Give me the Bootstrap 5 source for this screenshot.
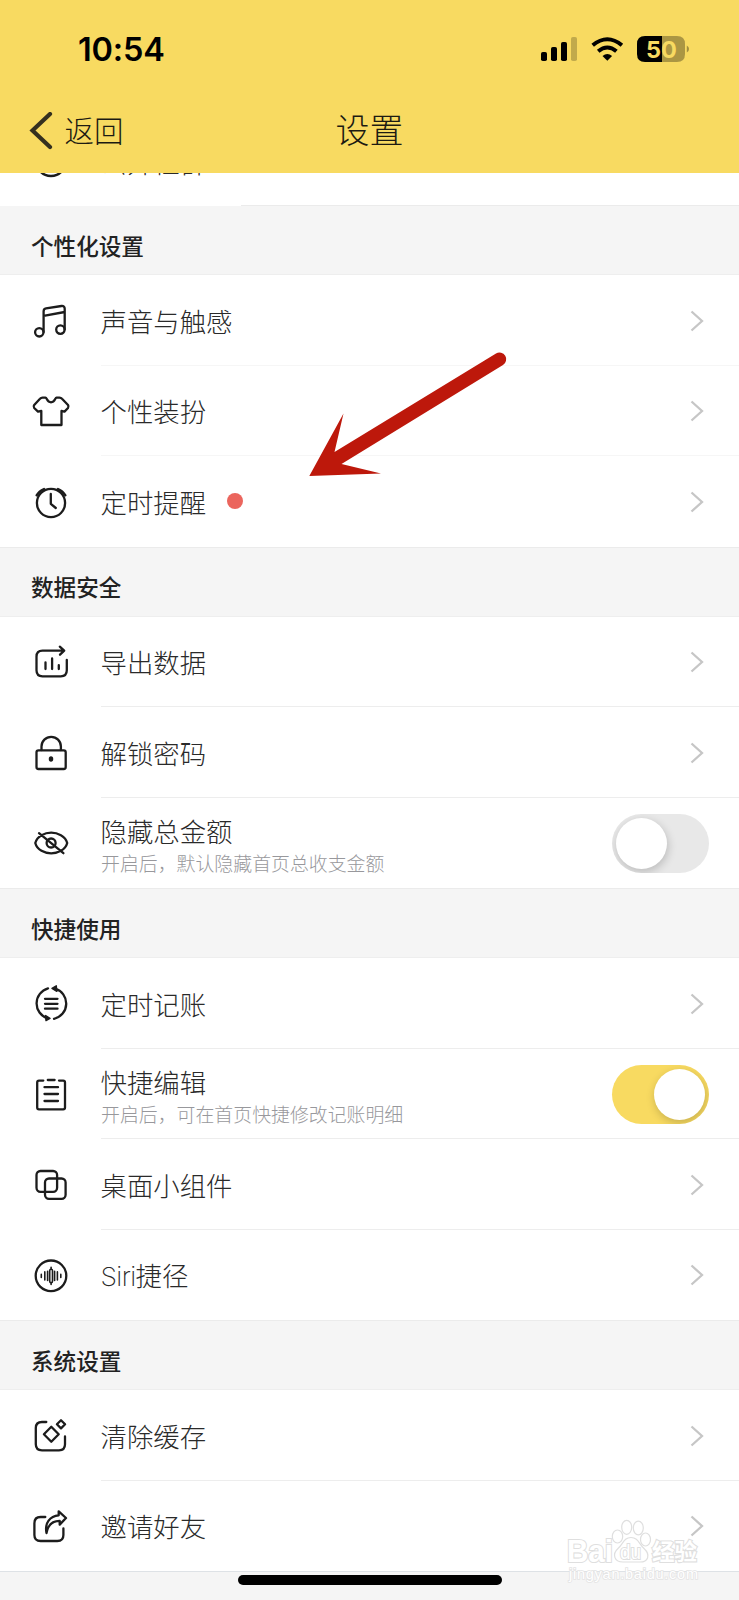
<!DOCTYPE html>
<html lang="zh-CN">
<head>
<meta charset="utf-8">
<meta name="viewport" content="width=device-width, initial-scale=1">
<title>设置</title>
<link href="https://cdn.jsdelivr.net/npm/bootstrap@5.3.0/dist/css/bootstrap.min.css" rel="stylesheet">
<script src="https://cdn.jsdelivr.net/npm/bootstrap@5.3.0/dist/js/bootstrap.bundle.min.js"></script>
<style>
  body { width: 739px; height: 1600px; overflow: hidden; background: #f5f5f5; color: #222; font-family: "Noto Sans CJK SC", sans-serif; }
  .topbar { height: 172.5px; background: #f8da61; z-index: 2; }
  .statusbar { height: 98px; padding: 0 50px 0 78px; }
  .clock { font: 600 32.5px/1 Inter, sans-serif; color: #000; letter-spacing: -.2px; padding-top: 3px; }
  .titlebar { height: 66px; }
  .back { left: 29px; font-size: 29.5px; font-weight: 300; line-height: 1; gap: 11.5px; color: #1c1a12; }
  .back span { padding-bottom: 3px; }
  .page-title { font-size: 34px; font-weight: 300; line-height: 1; padding-bottom: 4px; color: #1c1a12; }
  .peek { height: 32.5px; }
  .peek .setting { height: 90.7px; margin-top: -57px; }
  .section-title { height: 70px; padding: 12px 0 0 31px; font-size: 22.6px; font-weight: 500; line-height: 1; border-top: 1px solid #ebebeb; border-bottom: 1px solid #eeeeee; }
  .setting { height: 90.5px; padding-left: 27px; background: #fff; }
  .glyph { width: 48px; height: 48px; flex: none; fill: none; stroke: #1c1c1c; stroke-width: 2.3; stroke-linecap: round; stroke-linejoin: round; }
  .setting-body { margin-left: 26px; padding: 2px 35px 0 0; border-bottom: 1px solid #ededed; }
  .faint .setting-body { border-bottom-color: #f6f6f6; }
  .setting:last-child .setting-body { border-bottom-color: transparent; }
  .name { font-size: 26.4px; font-weight: 300; line-height: 32px; color: #2a2a2a; margin-left: -.5px; }
  .latin { font-family: Inter, sans-serif; font-weight: 200; letter-spacing: -.6px; }
  .two-line { padding-top: 4px; }
  .note { font-size: 18.9px; font-weight: 300; line-height: 24px; color: #98989c; margin-top: 4px; }
  .chev { width: 14px; height: 22px; fill: none; stroke: #c6c6c6; stroke-width: 2.3; }
  .dot { width: 16px; height: 16px; background: #eb655d; margin: -2px 0 0 21px; }
  .toggle { width: 97px; height: 59px; margin-right: -5px; padding: 4px; background: #e8e8e8; overflow: hidden; }
  .toggle.on { background: #f8da61; }
  .knob { width: 51px; height: 51px; background: #fff; box-shadow: 1px 3px 10px rgba(0,0,0,.2); }
  .pointer { left: 300px; top: 340px; }
  .home-bar { left: 238px; top: 1575px; width: 264px; height: 10px; background: #000; }
  .watermark { left: 560px; top: 1512px; }
</style>
</head>
<body class="position-relative">

<header class="topbar position-relative">
  <div class="statusbar d-flex align-items-center justify-content-between">
    <span class="clock">10:54</span>
    <svg width="150" height="30" viewBox="539 34 150 30">
      <g fill="#000">
        <rect x="541" y="52" width="6" height="9" rx="1.8"/><rect x="551" y="47" width="6" height="14" rx="1.8"/><rect x="561" y="42" width="6" height="19" rx="1.8"/>
        <rect x="571" y="37" width="6" height="24" rx="1.8" opacity=".22"/>
        <path d="M607.3 60.8 L602.5 56 Q607.3 52 612.1 56Z"/>
      </g>
      <g fill="none" stroke="#000" stroke-width="4"><path d="M592.7 45.2 Q607.3 33.2 621.9 45.2"/><path d="M598.2 51.3 Q607.3 43.8 616.4 51.3"/></g>
      <path d="M662 36 h15 q8 0 8 8 v10 q0 8 -8 8 h-15z" fill="#000" opacity=".31"/>
      <path d="M645 36 H662 V62 H645 Q637 62 637 54 V44 Q637 36 645 36Z" fill="#000"/>
      <path d="M686.8 45.5 Q689 46.5 689 49 T686.8 52.5Z" fill="#000" opacity=".35"/>
      <text x="661.5" y="57.5" text-anchor="middle" font-family="Inter, sans-serif" font-weight="700" font-size="23.5" fill="#f8da61">50</text>
    </svg>
  </div>
  <div class="titlebar position-relative d-flex align-items-center justify-content-center">
    <div class="back position-absolute d-flex align-items-center">
      <svg width="24" height="38" viewBox="0 0 24 38" fill="none" stroke="#35301f" stroke-width="4.2" stroke-linecap="round" stroke-linejoin="miter"><path d="M21 2 L3.5 18.5 L21 35"/></svg>
      <span>返回</span>
    </div>
    <span class="page-title">设置</span>
  </div>
</header>

<main>
  <div class="peek bg-white d-flex align-items-start">
    <div class="setting d-flex align-items-center">
      <svg class="glyph" viewBox="0 0 48 48"><circle cx="24" cy="24" r="15"/></svg>
      <div class="setting-body border-0"><span class="name">公开社群</span></div>
    </div>
  </div>

  <h2 class="section-title d-flex align-items-center m-0">个性化设置</h2>
  <section class="faint">
    <div class="setting d-flex align-items-center">
      <svg class="glyph" viewBox="0 0 48 48"><circle cx="12.3" cy="36.3" r="4.2"/><circle cx="33.4" cy="33.6" r="4.2"/><path d="M16.6 36 V15.5 Q16.6 12.8 19 12.4 L34.5 10 Q37.7 9.7 37.7 12.8 V33.6 M16.6 19.8 L37.7 16"/></svg>
      <div class="setting-body d-flex align-items-center flex-fill h-100"><span class="name">声音与触感</span><svg class="chev ms-auto" viewBox="0 0 14 22"><path d="M1.5 1.5 L12 11 L1.5 20.5"/></svg></div>
    </div>
    <div class="setting d-flex align-items-center">
      <svg class="glyph" viewBox="0 0 48 48"><path d="M15.5 10.6 H18.5 C20 10.6 19.8 15.3 24 15.3 C28.2 15.3 28 10.6 29.5 10.6 H32.5 Q34 10.6 35 11.8 L41 18 Q42 19.5 41 21 L37.5 24.6 L34.5 24 V38 H14.3 V24 L11 24.6 L7.2 21 Q6 19.5 7.2 18 L13 11.8 Q14 10.6 15.5 10.6Z"/></svg>
      <div class="setting-body d-flex align-items-center flex-fill h-100"><span class="name">个性装扮</span><svg class="chev ms-auto" viewBox="0 0 14 22"><path d="M1.5 1.5 L12 11 L1.5 20.5"/></svg></div>
    </div>
    <div class="setting d-flex align-items-center">
      <svg class="glyph" viewBox="0 0 48 48"><circle cx="24" cy="26" r="14.1"/><path d="M23.8 17 V26.8 L28.8 31 M9.6 18.3 Q12 14.2 17 12 M31 12 Q36 14.2 38.4 18.3"/></svg>
      <div class="setting-body d-flex align-items-center flex-fill h-100"><span class="name">定时提醒</span><span class="dot rounded-circle"></span><svg class="chev ms-auto" viewBox="0 0 14 22"><path d="M1.5 1.5 L12 11 L1.5 20.5"/></svg></div>
    </div>
  </section>

  <h2 class="section-title d-flex align-items-center m-0">数据安全</h2>
  <section>
    <div class="setting d-flex align-items-center">
      <svg class="glyph" viewBox="0 0 48 48"><path d="M39.8 22 V32.3 Q39.8 38.3 33.8 38.3 H15.5 Q9.5 38.3 9.5 32.3 V18.7 Q9.5 12.7 15.5 12.7 H37 M32.8 8.7 L37.2 12.7 L33 16.7 M18.5 24.5 V31 M25.1 20.5 V31 M31.8 27.2 V31"/></svg>
      <div class="setting-body d-flex align-items-center flex-fill h-100"><span class="name">导出数据</span><svg class="chev ms-auto" viewBox="0 0 14 22"><path d="M1.5 1.5 L12 11 L1.5 20.5"/></svg></div>
    </div>
    <div class="setting d-flex align-items-center">
      <svg class="glyph" viewBox="0 0 48 48"><rect x="9.5" y="22.3" width="29.2" height="18.7" rx="2"/><path d="M14.5 22 V18.5 A9.7 9.7 0 0 1 33.9 18.5 V22"/><ellipse cx="24" cy="30.9" rx="1.1" ry="1.6" fill="#1c1c1c"/></svg>
      <div class="setting-body d-flex align-items-center flex-fill h-100"><span class="name">解锁密码</span><svg class="chev ms-auto" viewBox="0 0 14 22"><path d="M1.5 1.5 L12 11 L1.5 20.5"/></svg></div>
    </div>
    <div class="setting d-flex align-items-center">
      <svg class="glyph" viewBox="0 0 48 48"><path d="M8.3 24 C10 17 18 13.6 24.2 13.6 S38.5 17 40.2 24 C38.5 31 30.5 34.4 24.2 34.4 S10 31 8.3 24Z M12 14.2 L36.4 34.2"/><circle cx="24.1" cy="24" r="4.5"/></svg>
      <div class="setting-body d-flex align-items-center flex-fill h-100"><div class="two-line d-flex flex-column"><span class="name">隐藏总金额</span><span class="note">开启后，默认隐藏首页总收支金额</span></div><div class="toggle rounded-pill d-flex ms-auto"><span class="knob rounded-circle"></span></div></div>
    </div>
  </section>

  <h2 class="section-title d-flex align-items-center m-0">快捷使用</h2>
  <section>
    <div class="setting d-flex align-items-center">
      <svg class="glyph" viewBox="0 0 48 48"><path d="M21 9.4 A15.6 15.6 0 0 0 20.5 39.3 M27 39.8 A15.6 15.6 0 0 0 28 9.6 M18 19.8 H30.5 M18 24.8 H30.5 M18 29.7 H30.5"/><path d="M25 9.4 L29.3 6.8 L29.8 12.4Z M23 39.4 L18.6 36.6 L19 41.6Z" fill="#1c1c1c" stroke-width="1.4"/></svg>
      <div class="setting-body d-flex align-items-center flex-fill h-100"><span class="name">定时记账</span><svg class="chev ms-auto" viewBox="0 0 14 22"><path d="M1.5 1.5 L12 11 L1.5 20.5"/></svg></div>
    </div>
    <div class="setting d-flex align-items-center">
      <svg class="glyph" viewBox="0 0 48 48"><path d="M16.3 10.6 H12 Q10.2 10.6 10.2 12.4 V37.6 Q10.2 39.4 12 39.4 H36.2 Q38 39.4 38 37.6 V12.4 Q38 10.6 36.2 10.6 H32 M20.8 10 H27.6 M17.5 17.2 H31 M17.5 24 H31 M17.5 31 H31"/></svg>
      <div class="setting-body d-flex align-items-center flex-fill h-100"><div class="two-line d-flex flex-column"><span class="name">快捷编辑</span><span class="note">开启后，可在首页快捷修改记账明细</span></div><div class="toggle on rounded-pill d-flex justify-content-end ms-auto"><span class="knob rounded-circle"></span></div></div>
    </div>
    <div class="setting d-flex align-items-center">
      <svg class="glyph" viewBox="0 0 48 48"><rect x="9.5" y="11" width="20.6" height="20.8" rx="4"/><rect x="18" y="18.5" width="20.6" height="20.3" rx="4"/></svg>
      <div class="setting-body d-flex align-items-center flex-fill h-100"><span class="name">桌面小组件</span><svg class="chev ms-auto" viewBox="0 0 14 22"><path d="M1.5 1.5 L12 11 L1.5 20.5"/></svg></div>
    </div>
    <div class="setting d-flex align-items-center">
      <svg class="glyph" viewBox="0 0 48 48"><circle cx="24" cy="24.8" r="15.3"/><g stroke-width="1.6"><path d="M14.3 23.4 V26.4 M17.8 20.9 V28.9 M20.6 20.4 V29.4 M27.6 20.4 V29.4 M30.4 20.9 V28.9 M33.8 23.4 V26.4 M24.1 16.2 V17.9 M24.1 31.9 V33.4"/><rect x="22.7" y="18.2" width="2.8" height="13.4" rx="1.4"/></g></svg>
      <div class="setting-body d-flex align-items-center flex-fill h-100"><span class="name"><span class="latin">Siri</span>捷径</span><svg class="chev ms-auto" viewBox="0 0 14 22"><path d="M1.5 1.5 L12 11 L1.5 20.5"/></svg></div>
    </div>
  </section>

  <h2 class="section-title d-flex align-items-center m-0">系统设置</h2>
  <section>
    <div class="setting d-flex align-items-center">
      <svg class="glyph" viewBox="0 0 48 48"><path d="M19.3 11 H15 Q8.8 11 8.8 17 V33.3 Q8.8 39.3 15 39.3 H32 Q38 39.3 38 33.3 V25.5 M24.3 15.8 L31.7 23.3 L24.3 30.8 L16.9 23.3Z M34 9.2 L38.1 13.3 L34 17.4 L29.9 13.3Z"/></svg>
      <div class="setting-body d-flex align-items-center flex-fill h-100"><span class="name">清除缓存</span><svg class="chev ms-auto" viewBox="0 0 14 22"><path d="M1.5 1.5 L12 11 L1.5 20.5"/></svg></div>
    </div>
    <div class="setting d-flex align-items-center">
      <svg class="glyph" viewBox="0 0 48 48"><path d="M18.3 15 H13.6 Q7.4 15 7.4 21.3 V33 Q7.4 39 13.6 39 H30.3 Q36.4 39 36.4 33 V26.5 M19.5 31 C17.5 21 23 13.8 31.7 13.3 V9.3 L39 16 L32.7 22.6 V18.9 C26 19 21 22.5 19.5 31Z"/></svg>
      <div class="setting-body d-flex align-items-center flex-fill h-100"><span class="name">邀请好友</span><svg class="chev ms-auto" viewBox="0 0 14 22"><path d="M1.5 1.5 L12 11 L1.5 20.5"/></svg></div>
    </div>
  </section>
  <div class="border-top"></div>
</main>

<!-- red arrow over the list -->
<svg class="pointer position-absolute" width="215" height="145" viewBox="300 340 215 145"><path d="M309.3 476 L343.5 413.5 L334.5 452 L496 353.5 A6.6 6.6 0 0 1 503 365 L341.5 464 L381 473.5Z" fill="#bd180b"/></svg>

<!-- watermark -->
<svg class="watermark position-absolute" width="150" height="75" viewBox="560 1512 150 75" fill="#fff" stroke="#dfdfdf" stroke-width="1.2">
  <ellipse cx="617.5" cy="1536.5" rx="5.2" ry="6.5"/><ellipse cx="626.7" cy="1527.3" rx="5" ry="7"/><ellipse cx="638.3" cy="1528" rx="5" ry="6.8"/><ellipse cx="645.5" cy="1539.5" rx="5" ry="6.5"/>
  <path d="M631 1537.5 C638 1537.5 639 1544 644 1548.5 C651 1555 648 1562 640 1562 H623 C614 1562 612 1554 618 1548.5 C623 1544 624 1537.5 631 1537.5Z"/>
  <g font-family="'Liberation Sans', sans-serif" font-weight="700" paint-order="stroke" stroke-width="2.2">
    <text x="567" y="1561.5" font-size="31" textLength="46" lengthAdjust="spacingAndGlyphs">Bai</text>
    <text x="620" y="1558.5" font-size="19.5" font-weight="400" textLength="21" lengthAdjust="spacingAndGlyphs" stroke-width="2">du</text>
    <text x="652" y="1560" font-size="22.5" font-family="'Noto Sans CJK SC', sans-serif">经验</text>
    <text x="569" y="1578.5" font-size="14.5" font-weight="400" textLength="129" stroke="#e4e4e4" stroke-width="1.6">jingyan.baidu.com</text>
  </g>
</svg>

<div class="home-bar position-absolute rounded-pill"></div>
</body>
</html>
